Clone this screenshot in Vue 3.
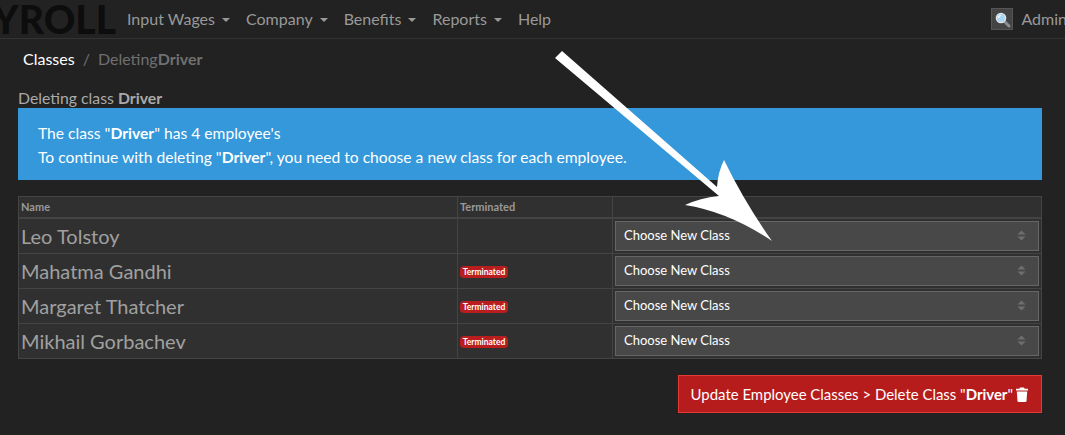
<template>
  <div class="page">
    <nav class="topbar">
      <div class="brand">YROLL</div>
      <ul class="menu">
        <li v-for="item in menu" :key="item.label" :class="{ caret: item.caret }">{{ item.label }}</li>
      </ul>
      <div class="user">
        <span class="search">
          <svg width="17" height="17" viewBox="0 0 17 17">
            <path d="M10 10 L15 15" stroke="#8a8f94" stroke-width="3" stroke-linecap="round" />
            <circle cx="7" cy="7" r="4.6" fill="#a9d6f5" stroke="#e4e6e8" stroke-width="1.4" />
            <path d="M4.6 7a2.6 2.6 0 0 1 2.3-2.5" fill="none" stroke="#fff" stroke-width="1.1" />
          </svg>
        </span>
        <span class="admin">Admin</span>
      </div>
    </nav>

    <div class="crumbs">
      <span class="crumb-link">Classes</span>
      <span class="crumb-sep">/</span>
      <span class="crumb-current">Deleting<b>Driver</b></span>
    </div>

    <main class="content">
      <div class="title">Deleting class <b>Driver</b></div>
      <div class="alert">
        <div>The class "<b>Driver</b>" has 4 employee's</div>
        <div>To continue with deleting "<b>Driver</b>", you need to choose a new class for each employee.</div>
      </div>

      <table class="staff">
        <thead>
          <tr>
            <th class="col-name">Name</th>
            <th class="col-term">Terminated</th>
            <th></th>
          </tr>
        </thead>
        <tbody>
          <tr v-for="emp in employees" :key="emp.name">
            <td class="name">{{ emp.name }}</td>
            <td><span v-if="emp.terminated" class="tag">Terminated</span></td>
            <td class="pick">
              <div class="select">
                <span>Choose New Class</span>
                <svg width="9" height="11" viewBox="0 0 9 11">
                  <path d="M4.5 0.5 L8.5 4.5 H0.5Z M4.5 10.5 L8.5 6.5 H0.5Z" fill="#6e6e6e" />
                </svg>
              </div>
            </td>
          </tr>
        </tbody>
      </table>

      <div class="actions">
        <button class="danger">
          <span>Update Employee Classes &gt; Delete Class "<b>Driver</b>"</span>
          <svg width="14" height="15" viewBox="0 0 13 15">
            <path d="M4.5 0.5h4l.6 1.2h3.4v1.8H.5V1.7h3.4zM1.3 4.5h10.4l-.7 9.4a1 1 0 0 1-1 1H3a1 1 0 0 1-1-1z" fill="#fff" />
          </svg>
        </button>
      </div>
    </main>

    <!-- annotation drawn over the screenshot -->
    <svg class="arrow" width="1065" height="435" viewBox="0 0 1065 435">
      <path
        d="M555 58 L562 51 L717 187 Q718 172 724 160 Q745 203 772 241 Q729 212 685 205 Q700 198 719 196 Z"
        fill="#fff"
      />
    </svg>
  </div>
</template>

<script setup>
const menu = [
  { label: "Input Wages", caret: true },
  { label: "Company", caret: true },
  { label: "Benefits", caret: true },
  { label: "Reports", caret: true },
  { label: "Help", caret: false },
];

const employees = [
  { name: "Leo Tolstoy", terminated: false },
  { name: "Mahatma Gandhi", terminated: true },
  { name: "Margaret Thatcher", terminated: true },
  { name: "Mikhail Gorbachev", terminated: true },
];
</script>

<style>
html,
body {
  margin: 0;
  background: #222;
  overflow: hidden;
}
</style>

<style scoped>
.page {
  position: relative;
  width: 1065px;
  height: 435px;
  overflow: hidden;
  background: #222;
  color: #aaa;
  font-family: Lato, "Liberation Sans", sans-serif;
  font-size: 16px;
}
.topbar {
  display: flex;
  align-items: center;
  height: 38px;
  border-bottom: 1px solid #333;
}
.brand {
  display: flex;
  justify-content: flex-end;
  width: 127px;
  flex-shrink: 0;
  padding-right: 11px;
  box-sizing: border-box;
  overflow: hidden;
  color: #0d0d0d;
  font-size: 39px;
  font-weight: 900;
  line-height: 38px;
  white-space: nowrap;
}
.menu {
  display: flex;
  gap: 16px;
  margin: 0 0 2px;
  padding: 0;
  list-style: none;
}
.menu li {
  color: #999;
  white-space: nowrap;
}
.menu li.caret::after {
  content: "";
  display: inline-block;
  margin-left: 7px;
  vertical-align: 3px;
  border-top: 4px solid #999;
  border-left: 4px solid transparent;
  border-right: 4px solid transparent;
}
.user {
  display: flex;
  align-items: center;
  gap: 8px;
  margin-left: auto;
  margin-right: -2px;
  flex-shrink: 0;
}
.search {
  display: flex;
  align-items: center;
  justify-content: center;
  box-sizing: border-box;
  width: 22px;
  height: 22px;
  background: #444;
  border: 1px solid #555;
}
.admin {
  color: #999;
  margin-bottom: 2px;
}
.crumbs {
  display: flex;
  gap: 8px;
  padding: 10px 0 0 23px;
  line-height: 20px;
}
.crumb-link {
  color: #fff;
}
.crumb-sep,
.crumb-current {
  color: #707070;
}
.content {
  padding: 20px 23px 0 18px;
}
.title {
  line-height: 18px;
  font-size: 15.8px;
}
.alert {
  box-sizing: border-box;
  height: 72px;
  margin-top: 1px;
  padding: 13px 20px;
  background: #3498db;
  color: #fff;
  font-size: 15.65px;
  line-height: 24px;
}
.staff {
  width: 1024px;
  margin-top: 16px;
  border-collapse: collapse;
  table-layout: fixed;
  background: #303030;
}
.staff th,
.staff td {
  border: 1px solid #444;
  padding: 0 2px;
  text-align: left;
}
.staff th {
  height: 19px;
  border-bottom-width: 2px;
  padding-bottom: 1px;
  color: #999;
  font-size: 11px;
  font-weight: 700;
}
.col-name {
  width: 434px;
}
.col-term {
  width: 150px;
}
.name {
  font-size: 20px;
  color: #a0a0a0;
}
.tag {
  display: block;
  width: 48px;
  margin-top: 2px;
  box-sizing: border-box;
  border-radius: 4px;
  background: #b91d1d;
  color: #fff;
  font-size: 8.5px;
  font-weight: 700;
  line-height: 12px;
  text-align: center;
  white-space: nowrap;
}
.staff td.pick {
  padding: 2px;
}
.select {
  display: flex;
  align-items: center;
  justify-content: space-between;
  box-sizing: border-box;
  height: 30px;
  padding: 0 12px 2px 8px;
  background: #484848;
  border: 1px solid #666;
  color: #fff;
  font-size: 13px;
}
.actions {
  display: flex;
  justify-content: flex-end;
  margin-top: 16px;
}
.danger {
  display: flex;
  align-items: center;
  gap: 2px;
  height: 38px;
  padding: 0 12px;
  background: #b71c1c;
  border: 1px solid #e53935;
  color: #fff;
  font-family: inherit;
  font-size: 14.95px;
  white-space: nowrap;
}
.arrow {
  position: absolute;
  top: 0;
  left: 0;
  pointer-events: none;
}
</style>
